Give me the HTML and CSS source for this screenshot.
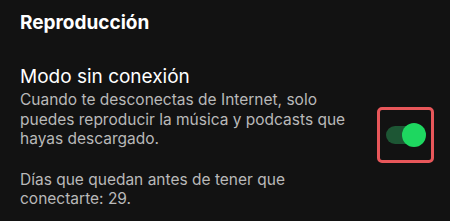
FILE: index.html
```html
<!DOCTYPE html>
<html lang="es">
<head>
<meta charset="utf-8">
<link rel="stylesheet" href="styles.css">
</head>
<body>
<div class="page">
  <h1 class="section-title">Reproducción</h1>
  <div class="setting">
    <div class="setting-text">
      <h2 class="setting-name">Modo sin conexión</h2>
      <p class="setting-desc">Cuando te desconectas de Internet, solo puedes reproducir la música y podcasts que hayas descargado.</p>
      <p class="setting-desc days">Días que quedan antes de tener que conectarte: 29.</p>
    </div>
    <div class="highlight">
      <div class="toggle">
        <div class="track"></div>
        <div class="knob"></div>
      </div>
    </div>
  </div>
</div>
</body>
</html>
```
FILE: styles.css
```css
html, body {
  margin: 0;
  padding: 0;
  background: #121212;
}
body {
  width: 450px;
  height: 221px;
  overflow: hidden;
  font-family: Inter, "Noto Sans", sans-serif;
}
.page {
  padding: 10px 0 0 20px;
}
.section-title {
  margin: 0;
  font-size: 19px;
  font-weight: 700;
  color: #ffffff;
  line-height: 26px;
}
.setting {
  display: flex;
  align-items: flex-start;
  margin-top: 28px;
}
.setting-text {
  width: 349px;
}
.setting-name {
  margin: 0;
  font-size: 19px;
  font-weight: 400;
  color: #ffffff;
  line-height: 26px;
}
.setting-desc {
  margin: 0;
  font-size: 15.5px;
  line-height: 19.5px;
  color: #b9b9b9;
}
.days {
  margin-top: 21px;
}
.highlight {
  margin-left: 8px;
  margin-top: 43px;
  width: 51px;
  height: 50px;
  border: 3px solid #e8575a;
  border-radius: 5px;
  display: flex;
  align-items: center;
  justify-content: center;
}
.toggle {
  position: relative;
  width: 40px;
  height: 24px;
}
.track {
  position: absolute;
  left: 0;
  top: 3px;
  width: 36px;
  height: 18px;
  border-radius: 9px;
  background: #1d5634;
}
.knob {
  position: absolute;
  right: 0;
  top: 0;
  width: 24px;
  height: 24px;
  border-radius: 50%;
  background: #1ed760;
}
```
